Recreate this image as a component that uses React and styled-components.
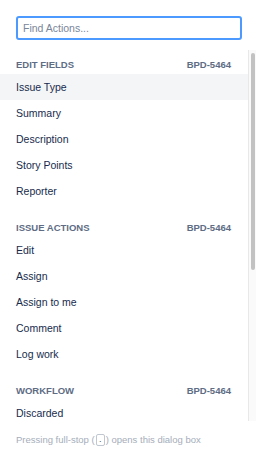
import React from 'react';
import styled, {createGlobalStyle} from 'styled-components';

const sections = [
    {
        title: 'Edit fields',
        issue: 'BPD-5464',
        items: ['Issue Type', 'Summary', 'Description', 'Story Points', 'Reporter'],
    },
    {
        title: 'Issue actions',
        issue: 'BPD-5464',
        items: ['Edit', 'Assign', 'Assign to me', 'Comment', 'Log work'],
    },
    {
        title: 'Workflow',
        issue: 'BPD-5464',
        items: ['Discarded'],
    },
];

const App = () => {
    return (
        <>
            <GlobalStyle/>
            <Dialog>
                <SearchWrap>
                    <Search autoFocus placeholder="Find Actions..."/>
                </SearchWrap>

                <ListWrap>
                    <List>
                        {sections.map((section) => (
                            <Section key={section.title}>
                                <Header>
                                    <span>{section.title}</span>
                                    <span>{section.issue}</span>
                                </Header>
                                {section.items.map((item, i) => (
                                    <Item key={item} active={section.title === 'Edit fields' && i === 0}>
                                        {item}
                                    </Item>
                                ))}
                            </Section>
                        ))}
                    </List>
                    <Track>
                        <Thumb/>
                    </Track>
                </ListWrap>

                <Footer>
                    <span>Pressing full-stop (</span>
                    <Key>.</Key>
                    <span>) opens this dialog box</span>
                </Footer>
            </Dialog>
        </>
    )
}

//Style
const GlobalStyle = createGlobalStyle`
  html, body {
    margin: 0;
    padding: 0;
    background: #fff;
  }
  body {
    font-family: "Liberation Sans", Arial, sans-serif;
    color: #172b4d;
  }
`;

const Dialog = styled.div`
  width: 256px;
  height: 458px;
  display: flex;
  flex-direction: column;
  background: #fff;
`;

const SearchWrap = styled.div`
  padding: 16px 14px 10px 16px;
`;

const Search = styled.input`
  box-sizing: border-box;
  width: 226px;
  height: 24px;
  border: 2px solid #4c9aff;
  border-radius: 3px;
  padding: 0 5px;
  font-family: inherit;
  font-size: 10.5px;
  color: #172b4d;
  outline: none;

  &::placeholder {
    color: #7a869a;
  }
`;

const ListWrap = styled.div`
  height: 371px;
  display: flex;
`;

const List = styled.div`
  flex: 1;
  overflow: hidden;
`;

const Track = styled.div`
  width: 8px;
  background: #fafafa;
  border-left: 1px solid #e8e8e8;
  padding: 3px 1px 0 2px;
  box-sizing: border-box;
`;

const Thumb = styled.div`
  height: 217px;
  background: #c2c2c2;
  border-radius: 3px;
`;

const Section = styled.div`
  padding-top: 4px;

  & + & {
    padding-top: 13px;
  }
`;

const Header = styled.div`
  height: 20px;
  display: flex;
  align-items: center;
  justify-content: space-between;
  padding: 0 17px 0 16px;
  font-size: 9.5px;
  font-weight: bold;
  text-transform: uppercase;
  color: #5e6c84;
`;

const Item = styled.div`
  height: 26px;
  display: flex;
  align-items: center;
  padding: 0 16px;
  font-size: 10.5px;
  color: #172b4d;
  background: ${props => props.active ? '#f4f5f7' : 'transparent'};
`;

const Footer = styled.div`
  flex: 1;
  display: flex;
  align-items: center;
  padding: 0 16px;
  font-size: 9.5px;
  color: #a5adba;
  white-space: pre;
`;

const Key = styled.span`
  display: inline-flex;
  align-items: flex-end;
  justify-content: center;
  box-sizing: border-box;
  width: 9px;
  height: 12px;
  margin: 0 1px;
  border: 1px solid #c1c7d0;
  border-radius: 2px;
  color: #42526e;
  font-size: 9px;
  line-height: 1;
  padding-bottom: 1px;
`;

export default App;
